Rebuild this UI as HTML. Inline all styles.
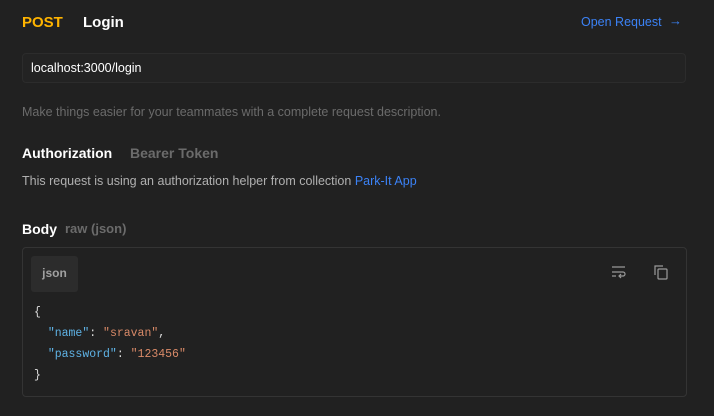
<!DOCTYPE html>
<html><head><style>
body{margin:0;width:714px;height:416px;background:#212121;font-family:"Liberation Sans",sans-serif;overflow:hidden;position:relative}
.a{position:absolute;white-space:nowrap}
</style></head><body>
<div class="a" style="left:22px;top:14px;font-size:15px;font-weight:bold;color:#ffb400">POST</div>
<div class="a" style="left:83px;top:14px;font-size:15px;font-weight:bold;color:#fff">Login</div>
<div class="a" style="left:581px;top:15px;font-size:12.5px;color:#3b82f6">Open Request</div>
<div class="a" style="left:669px;top:13px;font-size:13px;color:#3b82f6">&#8594;</div>
<div class="a" style="left:22px;top:53px;width:662px;height:28px;border:1px solid #2c2c2c;background:#232323;border-radius:4px"></div>
<div class="a" style="left:31px;top:61px;font-size:12.5px;color:#fff">localhost:3000/login</div>
<div class="a" style="left:22px;top:105px;font-size:12.5px;color:#6b6b6b">Make things easier for your teammates with a complete request description.</div>
<div class="a" style="left:22px;top:145px;font-size:14px;font-weight:bold;color:#fff">Authorization</div>
<div class="a" style="left:130px;top:145px;font-size:14px;font-weight:bold;color:#6b6b6b">Bearer Token</div>
<div class="a" style="left:22px;top:174px;font-size:12.5px;color:#b0b0b0">This request is using an authorization helper from collection <span style="color:#3b82f6">Park-It App</span></div>
<div class="a" style="left:22px;top:221px;font-size:14px;font-weight:bold;color:#fff">Body</div>
<div class="a" style="left:65px;top:221px;font-size:13px;font-weight:bold;color:#6b6b6b">raw (json)</div>
<div class="a" style="left:22px;top:247px;width:663px;height:148px;border:1px solid #343434;border-radius:4px"></div>
<div class="a" style="left:31px;top:256px;width:47px;height:36px;background:#2c2c2c;border-radius:3px;color:#a0a0a0;font-size:12px;font-weight:bold;text-align:center;line-height:34px">json</div>
<svg class="a" style="left:611px;top:264px" width="16" height="16" viewBox="0 0 16 16" fill="none" stroke="#9a9a9a" stroke-width="1.2"><path d="M1 3h13M1 8h11a2 2 0 0 1 0 4H8M10 10l-2 2 2 2M1 12h4"/></svg>
<svg class="a" style="left:653px;top:264px" width="16" height="16" viewBox="0 0 16 16" fill="none" stroke="#9a9a9a" stroke-width="1.2"><path d="M2 11V2h8"/><rect x="5" y="5" width="9" height="10" rx="1"/></svg>
<div class="a" style="left:34px;top:302px;font-family:'Liberation Mono',monospace;font-size:11.5px;line-height:21px;color:#ddd">{<br>&nbsp;&nbsp;<span style="color:#5fb3e6">"name"</span>: <span style="color:#d98a68">"sravan"</span>,<br>&nbsp;&nbsp;<span style="color:#5fb3e6">"password"</span>: <span style="color:#d98a68">"123456"</span><br>}</div>
</body></html>
